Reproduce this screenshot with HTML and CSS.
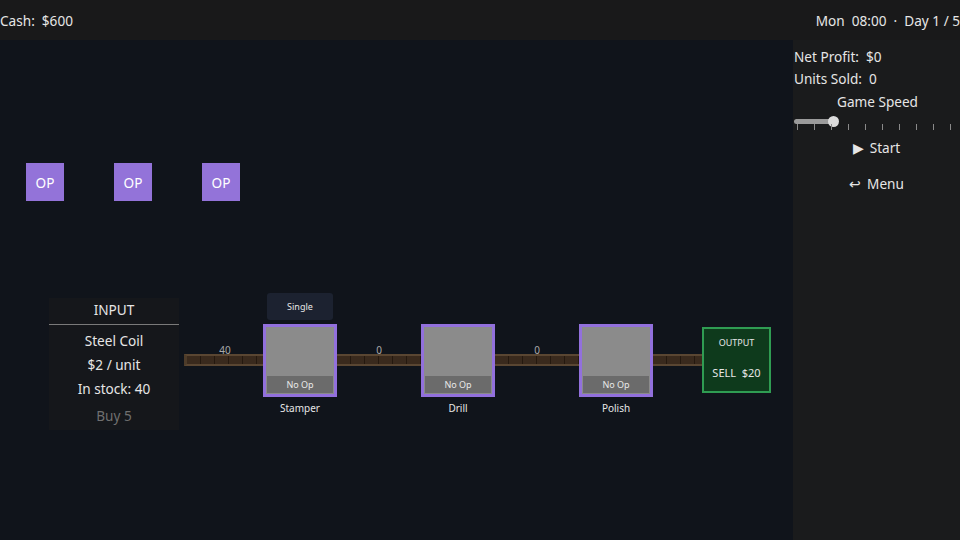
FILE: index.html
```html
<!DOCTYPE html>
<html lang="en">
<head>
    <meta charset="UTF-8">
    <title>Factory Line</title>
    <link rel="stylesheet" href="styles.css">
</head>
<body>
    <header class="topbar">
        <span class="cash">Cash:  $600</span>
        <span class="clock">Mon  08:00  ·  Day 1 / 5</span>
    </header>

    <div class="main">
        <div class="canvas">
            <div class="ops">
                <div class="op">OP</div>
                <div class="op">OP</div>
                <div class="op">OP</div>
            </div>

            <div class="line">
                <div class="input-panel">
                    <div class="input-title">INPUT</div>
                    <div class="input-row">Steel Coil</div>
                    <div class="input-row">$2 / unit</div>
                    <div class="input-row">In stock: 40</div>
                    <div class="input-buy">Buy 5</div>
                </div>

                <div class="belt belt-first">
                    <span class="belt-count">40</span>
                </div>

                <div class="machine">
                    <div class="mode">Single</div>
                    <div class="machine-box"><div class="machine-op">No Op</div></div>
                    <div class="machine-name">Stamper</div>
                </div>

                <div class="belt">
                    <span class="belt-count">0</span>
                </div>

                <div class="machine">
                    <div class="mode hidden">Single</div>
                    <div class="machine-box"><div class="machine-op">No Op</div></div>
                    <div class="machine-name">Drill</div>
                </div>

                <div class="belt">
                    <span class="belt-count">0</span>
                </div>

                <div class="machine">
                    <div class="mode hidden">Single</div>
                    <div class="machine-box"><div class="machine-op">No Op</div></div>
                    <div class="machine-name">Polish</div>
                </div>

                <div class="belt belt-last"></div>

                <div class="output">
                    <div class="output-title">OUTPUT</div>
                    <div class="output-sell">SELL  $20</div>
                </div>
            </div>
        </div>

        <aside class="side">
            <div class="stat">Net Profit:  $0</div>
            <div class="stat">Units Sold:  0</div>
            <div class="speed-title">Game Speed</div>
            <div class="slider">
                <div class="slider-fill"></div>
                <div class="slider-knob"></div>
                <div class="ticks">
                    <i></i><i></i><i></i><i></i><i></i><i></i><i></i><i></i><i></i><i></i>
                </div>
            </div>
            <div class="side-btn"><span class="play">▶</span> Start</div>
            <div class="side-btn"><span class="back">↩</span> Menu</div>
        </aside>
    </div>
</body>
</html>
```

FILE: styles.css
```css
/* Reset */
* {
    box-sizing: border-box;
}

body {
    margin: 0;
    width: 960px;
    height: 540px;
    overflow: hidden;
    font-family: "Noto Sans", "Open Sans", sans-serif;
    color: #e6e6e6;
    background-color: #10141b;
}

/* Top bar */
.topbar {
    height: 40px;
    background-color: #19191a;
    display: flex;
    justify-content: space-between;
    align-items: center;
    font-size: 13.6px;
}

.cash,
.clock {
    white-space: pre;
}

.main {
    display: flex;
    height: 500px;
}

/* Factory canvas */
.canvas {
    flex: 1;
    padding-top: 123px;
}

.ops {
    display: flex;
    gap: 50px;
    padding-left: 26px;
}

.op {
    width: 38px;
    height: 38px;
    background-color: #9373d9;
    color: #fff;
    font-size: 13.6px;
    display: flex;
    align-items: center;
    justify-content: center;
}

.line {
    display: flex;
    align-items: center;
    margin-top: 89px;
    padding-left: 49px;
}

.input-panel {
    width: 130px;
    height: 132px;
    margin-top: 8px;
    margin-right: 5px;
    background-color: #15171b;
    text-align: center;
    font-size: 13.6px;
}

.input-title {
    height: 27px;
    line-height: 24px;
    border-bottom: 1px solid #7a7a7a;
    margin-bottom: 4px;
}

.input-row {
    line-height: 24px;
}

.input-buy {
    line-height: 30px;
    color: #6f6f6f;
}

/* Conveyor */
.belt {
    position: relative;
    width: 84px;
    height: 12px;
    background-color: #3a2a1d;
    border-top: 2px solid #5a4632;
    border-bottom: 2px solid #5a4632;
    background-image: repeating-linear-gradient(90deg, transparent 0 13px, #25190f 13px 14px);
}

.belt-first {
    width: 79px;
    border-left: 3px solid #4d3b29;
}

.belt-last {
    width: 49px;
}

.belt-count {
    position: absolute;
    top: -13px;
    left: 0;
    right: 0;
    text-align: center;
    font-size: 10px;
    color: #a9a9a9;
}

/* Machines */
.machine {
    display: flex;
    flex-direction: column;
    align-items: center;
    width: 74px;
}

.mode {
    width: 66px;
    height: 27px;
    margin-bottom: 4px;
    background-color: #1c2230;
    border-radius: 3px;
    font-size: 9px;
    display: flex;
    align-items: center;
    justify-content: center;
}

.hidden {
    visibility: hidden;
}

.machine-box {
    width: 74px;
    height: 73px;
    border: 3px solid #9270dc;
    background-color: #8b8b8b;
    display: flex;
    flex-direction: column;
    justify-content: flex-end;
    padding: 0 1px 1px;
}

.machine-op {
    height: 17px;
    background-color: #6b6b6b;
    font-size: 9px;
    color: #e8e8e8;
    text-align: center;
    line-height: 17px;
}

.machine-name {
    height: 31px;
    padding-top: 4px;
    font-size: 10px;
}

.output {
    width: 69px;
    height: 66px;
    border: 2px solid #2f9c52;
    background-color: #0e3a1c;
    text-align: center;
}

.output-title {
    font-size: 9px;
    margin-top: 7px;
}

.output-sell {
    font-size: 11px;
    margin-top: 16px;
    white-space: pre;
}

/* Side panel */
.side {
    width: 167px;
    background-color: #1a1b1c;
    padding-top: 6px;
    font-size: 13.6px;
}

.stat {
    line-height: 22px;
    padding-left: 1px;
    white-space: pre;
}

.speed-title {
    line-height: 22px;
    text-align: center;
    padding-left: 2px;
    margin-top: 1px;
}

.slider {
    position: relative;
    height: 16px;
}

.slider-fill {
    position: absolute;
    left: 1px;
    top: 6px;
    width: 40px;
    height: 5px;
    border-radius: 3px;
    background-color: #9b9b9b;
}

.slider-knob {
    position: absolute;
    left: 35px;
    top: 3px;
    width: 11px;
    height: 11px;
    border-radius: 50%;
    background-color: #dcdcdc;
}

.ticks {
    position: absolute;
    left: 4px;
    top: 11px;
    display: flex;
    gap: 16px;
}

.ticks i {
    display: block;
    width: 1px;
    height: 6px;
    background-color: #8a8a8a;
}

.side-btn {
    height: 36px;
    display: flex;
    align-items: center;
    justify-content: center;
    gap: 6px;
}

.play {
    font-size: 13.6px;
}
```
